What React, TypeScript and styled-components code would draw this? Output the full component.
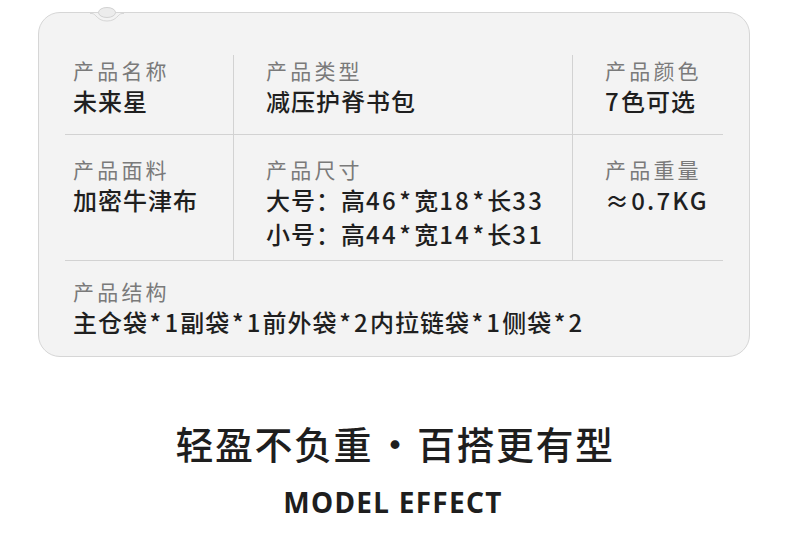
import React from "react";
import styled, { createGlobalStyle } from "styled-components";

const GlobalStyle = createGlobalStyle`
  html, body {
    margin: 0;
    padding: 0;
    background: #ffffff;
  }
  body {
    font-family: "Noto Sans CJK SC", "Noto Sans", sans-serif;
    color: #222222;
  }
`;

const Page = styled.div`
  width: 790px;
  height: 557px;
  padding-top: 12px;
  box-sizing: border-box;
  display: flex;
  flex-direction: column;
  align-items: center;
`;

const Card = styled.div`
  position: relative;
  width: 712px;
  box-sizing: border-box;
  margin-right: 2px;
  background: #f3f3f3;
  border: 1px solid #d6d6d6;
  border-radius: 22px;
  padding: 42px 26px 17px 26px;
`;

const Hanger = styled.svg`
  position: absolute;
  top: -7px;
  left: 51px;
`;

const Table = styled.div`
  display: grid;
  grid-template-columns: 168px 339px 1fr;
`;

const Cell = styled.div<{ $padTop: number; $padBottom: number; $divider?: boolean; $line?: boolean; $span?: boolean }>`
  padding: ${(p) => p.$padTop}px 0 ${(p) => p.$padBottom}px
    ${(p) => (p.$divider ? 32 : 8)}px;
  border-left: ${(p) => (p.$divider ? "1px solid #d2d2d2" : "none")};
  border-bottom: ${(p) => (p.$line ? "1px solid #d2d2d2" : "none")};
  grid-column: ${(p) => (p.$span ? "1 / -1" : "auto")};
`;

const Label = styled.div`
  font-size: 21px;
  line-height: 26px;
  margin-bottom: 1px;
  letter-spacing: 3.2px;
  color: #7a7a7a;
  font-weight: 400;
`;

const Value = styled.div`
  font-size: 24px;
  line-height: 34px;
  letter-spacing: 1px;
  color: #1f1f1f;
  font-weight: 500;
  white-space: nowrap;
`;

const Latin = styled.span`
  letter-spacing: 2.2px;
`;

const Star = styled.span`
  padding: 0 2.2px 0 1.6px;
`;

const Heading = styled.h2`
  margin: 60px 0 0 0;
  font-size: 38px;
  line-height: 52px;
  font-weight: 500;
  letter-spacing: 1.5px;
  color: #1e1e1e;
  display: flex;
  align-items: center;
`;

const Dot = styled.span`
  display: inline-block;
  width: 44px;
  text-align: center;
  letter-spacing: 0;
`;

const SubHeading = styled.div`
  margin-top: 15px;
  margin-right: 4px;
  font-family: "Noto Sans", sans-serif;
  font-size: 28px;
  line-height: 36px;
  font-weight: 700;
  letter-spacing: 1.3px;
  color: #1e1e1e;
`;

// digits and latin letters sit wider than the CJK run in the artwork
const renderValue = (text: string) =>
  text.split(/([0-9A-Za-z.≈]+|\*)/).map((part, i) => {
    if (!part) return null;
    if (part === "*") return <Star key={i}>*</Star>;
    if (/^[0-9A-Za-z.≈]+$/.test(part)) return <Latin key={i}>{part}</Latin>;
    return <React.Fragment key={i}>{part}</React.Fragment>;
  });

type Item = { label: string; values: string[] };

const rows: { items: Item[]; padTop: number; padBottom: number }[] = [
  {
    items: [
      { label: "产品名称", values: ["未来星"] },
      { label: "产品类型", values: ["减压护脊书包"] },
      { label: "产品颜色", values: ["7色可选"] },
    ],
    padTop: 2,
    padBottom: 16,
  },
  {
    items: [
      { label: "产品面料", values: ["加密牛津布"] },
      { label: "产品尺寸", values: ["大号：高46*宽18*长33", "小号：高44*宽14*长31"] },
      { label: "产品重量", values: ["≈0.7KG"] },
    ],
    padTop: 21,
    padBottom: 9,
  },
];

const App = () => {
  return (
    <>
      <GlobalStyle />
      <Page>
        <Card>
          <Hanger width="34" height="17" viewBox="0 0 34 17">
            <rect x="0" y="8" width="34" height="9" fill="#f3f3f3" />
            <path d="M0 7.5 L2 7.5 C6 7.5 7 15 17 15 C27 15 28 7.5 32 7.5 L34 7.5" fill="#f3f3f3" stroke="#d6d6d6" strokeWidth="1" />
            <ellipse cx="17" cy="6.5" rx="8.5" ry="5" fill="#ececec" stroke="#d2d2d2" strokeWidth="1" />
          </Hanger>
          <Table>
            {rows.map((row, r) =>
              row.items.map((item, i) => (
                <Cell
                  key={`${r}-${i}`}
                  $padTop={row.padTop}
                  $padBottom={row.padBottom}
                  $divider={i > 0}
                  $line
                >
                  <Label>{item.label}</Label>
                  {item.values.map((v) => (
                    <Value key={v}>{renderValue(v)}</Value>
                  ))}
                </Cell>
              ))
            )}
            <Cell $padTop={17} $padBottom={0} $span>
              <Label>产品结构</Label>
              <Value>{renderValue("主仓袋*1副袋*1前外袋*2内拉链袋*1侧袋*2")}</Value>
            </Cell>
          </Table>
        </Card>
        <Heading>
          轻盈不负重<Dot>·</Dot>百搭更有型
        </Heading>
        <SubHeading>MODEL EFFECT</SubHeading>
      </Page>
    </>
  );
};

export default App;
